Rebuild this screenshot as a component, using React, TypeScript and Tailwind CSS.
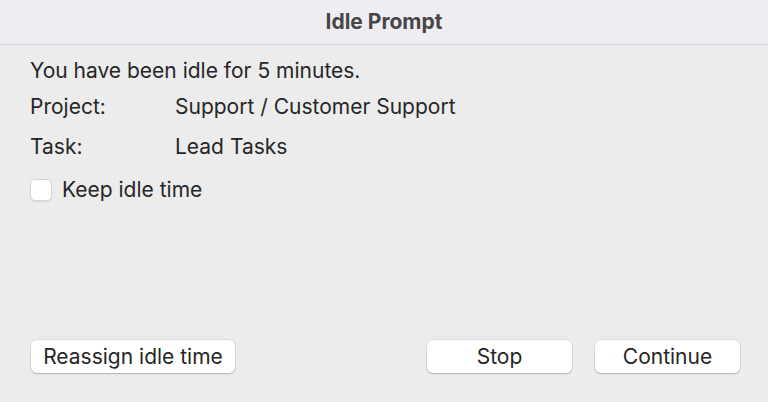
const font = { fontFamily: "Inter, 'Liberation Sans', sans-serif" };

function MacButton({ label, className }: { label: string; className: string }) {
  return (
    <button
      className={
        "h-[33px] rounded-[6px] bg-white text-[21px] leading-[24px] text-[#262626] shadow-[0_0_0_0.5px_rgba(0,0,0,0.12),0_1px_1.5px_rgba(0,0,0,0.2)] " +
        className
      }
    >
      {label}
    </button>
  );
}

export default function App() {
  return (
    <div
      className="flex h-[402px] w-[768px] flex-col overflow-hidden bg-[#ececec] text-[#262626]"
      style={font}
    >
      <header className="flex h-[45px] shrink-0 items-center justify-center border-b border-[#d1d0d4] bg-[#efedf2]">
        <span className="text-[21px] font-bold text-[#464646]">Idle Prompt</span>
      </header>

      <main className="flex flex-1 flex-col pl-[30px] pr-[28px] pt-[14px] text-[21px]">
        <p className="leading-[24px]">You have been idle for 5 minutes.</p>
        <div className="mt-[12px] flex leading-[24px]">
          <span className="w-[145px]">Project:</span>
          <span>Support / Customer Support</span>
        </div>
        <div className="mt-[16px] flex leading-[24px]">
          <span className="w-[145px]">Task:</span>
          <span>Lead Tasks</span>
        </div>
        <label className="mt-[19px] flex items-center gap-[10px] leading-[24px]">
          <span className="h-[22px] w-[22px] rounded-[5px] border border-[#d6d6d6] bg-white shadow-[0_0.5px_1px_rgba(0,0,0,0.08)]" />
          <span>Keep idle time</span>
        </label>

        <div className="mt-auto mb-[29px] flex items-center">
          <MacButton label="Reassign idle time" className="ml-[1px] w-[204px]" />
          <div className="ml-auto flex gap-[23px]">
            <MacButton label="Stop" className="w-[145px]" />
            <MacButton label="Continue" className="w-[145px]" />
          </div>
        </div>
      </main>
    </div>
  );
}
